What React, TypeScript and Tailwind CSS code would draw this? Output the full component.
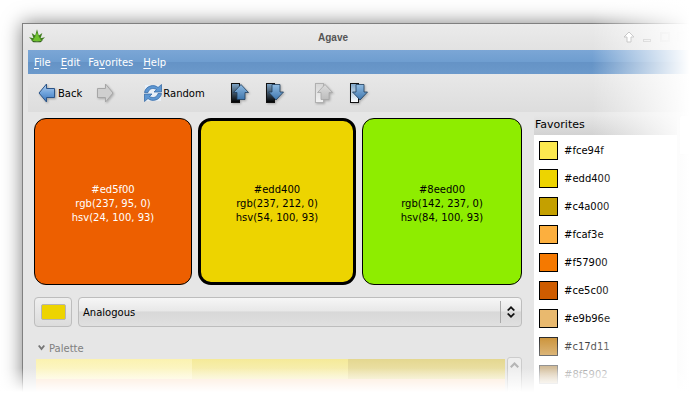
import * as React from 'react';

const font = { fontFamily: '"DejaVu Sans", sans-serif' };

const favorites = ['#fce94f', '#edd400', '#c4a000', '#fcaf3e', '#f57900', '#ce5c00', '#e9b96e', '#c17d11', '#8f5902'];

const schemes = [
  { hex: '#ed5f00', rgb: 'rgb(237, 95, 0)', hsv: 'hsv(24, 100, 93)', bg: 'bg-[#ed5f00]', text: 'text-white', border: 'border border-black rounded-[12px]', w: 'w-[158px]' },
  { hex: '#edd400', rgb: 'rgb(237, 212, 0)', hsv: 'hsv(54, 100, 93)', bg: 'bg-[#edd400]', text: 'text-black', border: 'border-[3px] border-black rounded-[13px]', w: 'w-[158px]' },
  { hex: '#8eed00', rgb: 'rgb(142, 237, 0)', hsv: 'hsv(84, 100, 93)', bg: 'bg-[#8eed00]', text: 'text-black', border: 'border border-black rounded-[12px]', w: 'w-[160px]' },
];

function AgaveLogo() {
  return (
    <svg width="16" height="14" viewBox="0 0 18 15">
      <path d="M0 9 L5 10 L3 4 L7 7 L9 0 L11 7 L15 4 L13 10 L18 9 L13 14 H5 Z" fill="#3f7d1c" />
      <path d="M4 13 L7 8 L9 3 L11 8 L14 13 Z" fill="#6fc12f" />
      <path d="M2 12 Q9 16 16 12 L13 14.5 H5 Z" fill="#2a5a12" />
    </svg>
  );
}

function ArrowLeft() {
  return (
    <svg className="drop-shadow-[1px_1px_1px_rgba(0,0,0,0.3)]" width="18" height="20" viewBox="0 0 18 20">
      <defs>
        <linearGradient id="blueV" x1="0" y1="0" x2="0" y2="1">
          <stop offset="0" stopColor="#b4d0ee" />
          <stop offset="0.5" stopColor="#6fa3dc" />
          <stop offset="1" stopColor="#3a74b8" />
        </linearGradient>
      </defs>
      <path d="M8.5 1 L1 10 L8.5 19 V14.5 H16.5 V5.5 H8.5 Z" fill="url(#blueV)" stroke="#2a5488" strokeWidth="1" strokeLinejoin="round" />
    </svg>
  );
}

function ArrowRight() {
  return (
    <svg className="drop-shadow-[1px_1px_1px_rgba(0,0,0,0.25)]" width="18" height="20" viewBox="0 0 18 20">
      <path d="M9.5 1 L17 10 L9.5 19 V14.5 H1.5 V5.5 H9.5 Z" fill="#cfcfcf" stroke="#a6a6a6" strokeWidth="1" strokeLinejoin="round" />
    </svg>
  );
}

function RefreshIcon() {
  return (
    <svg width="20" height="20" viewBox="0 0 20 20">
      <rect x="2" y="2" width="16" height="16" fill="#e9f0f8" />
      <path d="M1.5 9.5 C2.5 3 11 0.5 15 4.5 L18.5 1.5 V9 H11 L13.5 6.5 C10 4.5 6 5.5 5 9.5 Z" fill="#5d97d3" stroke="#2f639f" strokeWidth="0.7" />
      <path d="M18.5 10.5 C17.5 17 9 19.5 5 15.5 L1.5 18.5 V11 H9 L6.5 13.5 C10 15.5 14 14.5 15 10.5 Z" fill="#5d97d3" stroke="#2f639f" strokeWidth="0.7" />
    </svg>
  );
}

// bar + arrow button used by the four favorites/history tools
function BarArrow({ id, dir, end, disabled }: { id: string; dir: 'up' | 'down'; end: string; disabled?: boolean }) {
  const barTop = disabled ? '#d6d6d6' : '#7fa6c9';
  const barStroke = disabled ? '#b0b0b0' : '#111111';
  const arrowTop = disabled ? '#dcdcdc' : '#8fbbe2';
  const arrowBottom = disabled ? '#bdbdbd' : '#3f76ad';
  const arrowStroke = disabled ? '#a6a6a6' : '#1e3c5c';
  return (
    <svg className="drop-shadow-[1px_1px_1px_rgba(0,0,0,0.25)]" width="18" height="20" viewBox="0 0 18 20">
      <defs>
        <linearGradient id={`bar-${id}`} x1="0" y1="0" x2="0" y2="1">
          <stop offset="0" stopColor={barTop} />
          <stop offset="1" stopColor={end} />
        </linearGradient>
        <linearGradient id={`arrow-${id}`} x1="0" y1="0" x2="0" y2="1">
          <stop offset="0" stopColor={arrowTop} />
          <stop offset="1" stopColor={arrowBottom} />
        </linearGradient>
      </defs>
      <rect x="0.5" y="0.5" width="8" height="19" fill={`url(#bar-${id})`} stroke={barStroke} />
      {dir === 'up' ? (
        <path d="M10 1.5 L17.5 9.5 H14 V16.5 H6 V9.5 H2.5 Z" fill={`url(#arrow-${id})`} stroke={arrowStroke} strokeWidth="0.8" />
      ) : (
        <path d="M6 1.5 H14 V9 H17.5 L10 17 L2.5 9 H6 Z" fill={`url(#arrow-${id})`} stroke={arrowStroke} strokeWidth="0.8" />
      )}
    </svg>
  );
}

function Mnemonic({ first, rest, pre, className }: { first: string; rest: string; pre?: string; className?: string }) {
  return (
    <span className={className}>
      {pre}
      <span className="underline underline-offset-2">{first}</span>
      {rest}
    </span>
  );
}

export default function App() {
  return (
    <div className="relative w-[700px] h-[400px] overflow-hidden bg-white text-[10px]" style={font}>
      <div className="pt-[23px] pl-[22px]">
        {/* Window */}
        <div className="w-[700px] h-[400px] border-t border-l border-[#808080] bg-[#e6e6e6] shadow-[0_0_18px_rgba(0,0,0,0.5)]">
          {/* Title bar */}
          <div className="h-[26px] bg-gradient-to-b from-[#ebebeb] to-[#e2e2e2] flex items-center relative w-[678px]">
            <div className="ml-[6px] mt-[-3px] flex"><AgaveLogo /></div>
            <span className="absolute left-[295px] top-[6px] text-[#555555] font-bold text-[10px]" style={{ fontFamily: '"Liberation Sans", sans-serif' }}>Agave</span>
            <div className="absolute left-[600px] top-[7px] flex items-center">
              <svg width="12" height="12" viewBox="0 0 12 12"><path d="M6 1 L11 6 H8 V11 H4 V6 H1 Z" fill="#ffffff" stroke="#a8a8a8" /></svg>
              <div className="ml-[8px] mt-[7px] w-[8px] h-[3px] border border-[#b4b4b4]" />
              <div className="ml-[9px] w-[10px] h-[10px] border-2 border-[#d8d8d8]" />
              <div className="ml-[7px] w-[10px] h-[10px] border-2 border-[#e0e0e0]" />
            </div>
          </div>
          <div className="pl-[5px] w-[678px]">
            {/* Menu bar */}
            <div className="h-[24px] bg-[linear-gradient(#7ba6d6,#6f9ed0_48%,#6593c6_52%,#6b99cb)] flex items-center gap-[10px] pl-[6px] text-white">
              <Mnemonic first="F" rest="ile" />
              <Mnemonic first="E" rest="dit" />
              <Mnemonic pre="Fa" first="v" rest="orites" className="ml-[-2px]" />
              <Mnemonic first="H" rest="elp" />
            </div>
            {/* Toolbar */}
            <div className="h-[38px] bg-gradient-to-b from-[#e8e8e8] to-[#dddddd] flex items-center text-black">
              <div className="ml-[10px] flex"><ArrowLeft /></div>
              <span className="ml-[2px]">Back</span>
              <div className="ml-[14px] flex"><ArrowRight /></div>
              <div className="ml-[29px] flex"><RefreshIcon /></div>
              <span>Random</span>
              <div className="ml-[26px] flex"><BarArrow id="a" dir="up" end="#000000" /></div>
              <div className="ml-[17px] flex"><BarArrow id="b" dir="down" end="#000000" /></div>
              <div className="ml-[31px] flex"><BarArrow id="c" dir="up" end="#f2f2f2" disabled /></div>
              <div className="ml-[17px] flex"><BarArrow id="d" dir="down" end="#ffffff" /></div>
            </div>
            {/* Body */}
            <div className="flex pl-[6px] pt-[6px]">
              <div className="w-[488px]">
                <div className="flex gap-[6px]">
                  {schemes.map((s) => (
                    <div
                      key={s.hex}
                      className={`${s.w} h-[167px] ${s.bg} ${s.text} ${s.border} flex flex-col items-center justify-center pt-[4px] leading-[14px] text-center`}
                    >
                      <div>{s.hex}</div>
                      <div>{s.rgb}</div>
                      <div>{s.hsv}</div>
                    </div>
                  ))}
                </div>
                <div className="flex gap-[6px] mt-[12px]">
                  <div className="w-[38px] h-[30px] rounded-[4px] border border-[#bdbdbd] bg-gradient-to-b from-[#efefef] to-[#dcdcdc] flex items-center justify-center">
                    <div className="w-[25px] h-[16px] rounded-[2px] border border-[#b5b5b5] bg-[#edd400]" />
                  </div>
                  <div className="w-[444px] h-[30px] rounded-[4px] border border-[#bdbdbd] bg-[linear-gradient(#f6f6f6,#e8e8e8_46%,#d8d8d8_50%,#e0e0e0)] flex items-center pl-[4px] text-black">
                    <span className="flex-1 pt-px">Analogous</span>
                    <div className="w-px h-[22px] bg-[#a9a9a9]" />
                    <svg className="mx-[6px]" width="8" height="12" viewBox="0 0 8 12">
                      <path d="M4 0 L8 4 L6.5 5 L4 2.5 L1.5 5 L0 4 Z M4 12 L8 8 L6.5 7 L4 9.5 L1.5 7 L0 8 Z" fill="#111111" />
                    </svg>
                  </div>
                </div>
                <div className="mt-[14px] pl-[4px] flex items-center gap-[4px] text-[#808080] h-[14px]">
                  <svg width="7" height="6" viewBox="0 0 7 6"><path d="M0 1 L1.5 0 L3.5 2.5 L5.5 0 L7 1 L3.5 5.5 Z" fill="#777777" /></svg>
                  Palette
                </div>
                <div className="flex mt-[4px] pl-[2px]">
                  <div className="w-[469px]">
                    <div className="flex h-[20px]">
                      <div className="w-[156px] bg-gradient-to-b from-[#fbf2b0] to-[#fdf8d4]" />
                      <div className="w-[156px] bg-gradient-to-b from-[#f5ea98] to-[#f9f2c4]" />
                      <div className="w-[157px] bg-gradient-to-b from-[#e4d78f] to-[#f0e7b6]" />
                    </div>
                    <div className="h-[20px] bg-[#fde6d2]" />
                  </div>
                  <div className="ml-[2px] w-[15px] h-[40px] mt-[-2px] rounded-t-[3px] border border-[#cccccc] bg-[#eeeeee] flex justify-center pt-[4px]">
                    <svg width="9" height="6" viewBox="0 0 9 6"><path d="M0 4.5 L4.5 0 L9 4.5 L7.5 6 L4.5 3 L1.5 6 Z" fill="#b5b5b5" /></svg>
                  </div>
                </div>
              </div>
              {/* Favorites */}
              <div className="ml-[12px] w-[143px] mt-[-3px] shrink-0">
                <div className="h-[20px] px-px text-black text-[11px] leading-[20px] bg-gradient-to-b from-[#e6e6e6] to-[#d2d2d2]">Favorites</div>
                <div className="relative bg-white h-[300px] pt-px pl-[5px] overflow-hidden">
                  {favorites.map((hex) => (
                    <div key={hex} className="h-[28px] flex items-center gap-[6px] text-black">
                      <div className="w-[19px] h-[19px] border border-black" style={{ backgroundColor: hex }} />
                      <span>{hex}</span>
                    </div>
                  ))}
                  {/* list runs out into white faster than the rest of the window */}
                  <div className="absolute left-0 right-0 top-[190px] h-[70px] bg-gradient-to-b from-transparent to-white" />
                </div>
              </div>
              <div className="ml-[2px] mt-[-3px] w-[15px] h-[40px] rounded-t-[3px] border border-[#dddddd] bg-white" />
            </div>
          </div>
        </div>
      </div>
      {/* Screenshot fade-out at the right and bottom edges */}
      <div className="absolute top-0 right-0 bottom-0 w-[108px] bg-gradient-to-r from-transparent to-white to-[90%]" />
      <div className="absolute left-0 right-0 bottom-0 h-[40px] bg-gradient-to-b from-transparent from-[20%] to-white to-[80%]" />
    </div>
  );
}
